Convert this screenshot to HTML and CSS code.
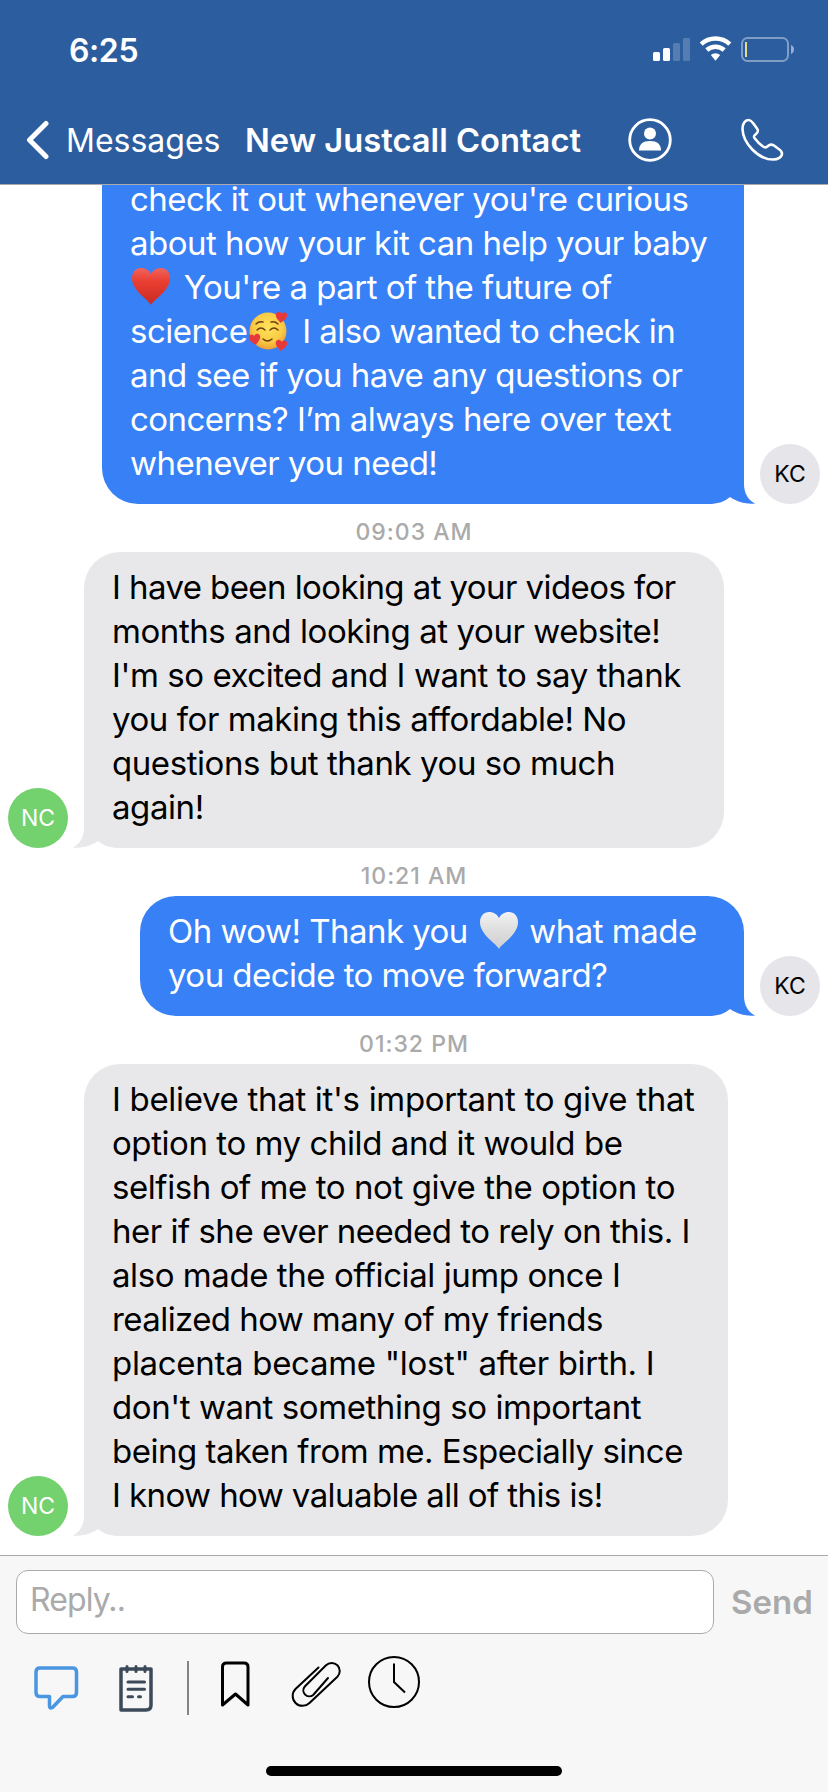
FILE: index.html
```
<!DOCTYPE html>
<html lang="en">
<head>
<meta charset="utf-8">
<title>New Justcall Contact</title>
<link rel="stylesheet" href="styles.css">
</head>
<body>
<svg class="defs" width="0" height="0" aria-hidden="true">
  <defs>
    <linearGradient id="red" x1="0" y1="0" x2="0" y2="1"><stop offset="0" stop-color="#f0655c"/><stop offset=".35" stop-color="#ea3f33"/><stop offset="1" stop-color="#c92a20"/></linearGradient>
    <linearGradient id="white" x1="0" y1="0" x2="0" y2="1"><stop offset="0" stop-color="#f2f2f2"/><stop offset=".5" stop-color="#dedede"/><stop offset="1" stop-color="#cfcfcf"/></linearGradient>
    <radialGradient id="face" cx=".5" cy=".4" r=".6"><stop offset="0" stop-color="#fde25a"/><stop offset=".65" stop-color="#fbcb45"/><stop offset="1" stop-color="#ee9f33"/></radialGradient>
    <path id="heart" d="M20 38C17 32 1 24 1 11C1 5 5 1 10 1C15 1 18 3.500 20 7C22 3.500 25 1 30 1C35 1 39 5 39 11C39 24 23 32 20 38Z"/>
    <path id="tail" d="M0 0C0 9 4 16 11 19.500C3 20.500-7 18-14 13C-20 18-27 20-35 20H-36V0Z"/>
  </defs>
</svg>
<div class="phone">
  <header class="header">
    <div class="status">
      <span class="clock">6:25</span>
      <svg class="indicators" width="144" height="28" viewBox="0 0 144 28">
        <g fill="#fff"><rect x="1" y="16" width="7" height="9" rx="1.500"/><rect x="11" y="12" width="7" height="13" rx="1.500"/></g>
        <g fill="#fff" opacity=".2"><rect x="21" y="7" width="7" height="18" rx="1.500"/><rect x="31" y="2" width="7" height="23" rx="1.500"/></g>
        <g fill="none" stroke="#fff" stroke-width="4.500"><path d="M49.200 8.200A21 21 0 0 1 77.800 8.200"/><path d="M54.800 14A13 13 0 0 1 72.200 14"/></g>
        <path d="M58.800 19A7 7 0 0 1 68.200 19L63.500 24.800Z" fill="#fff"/>
        <rect x="90" y="2" width="46" height="23" rx="5.500" fill="none" stroke="#fff" stroke-opacity=".4" stroke-width="2"/>
        <rect x="93" y="6" width="2" height="15" fill="#e3dc8b"/>
        <path d="M139 9C143 10 143 17 139 18Z" fill="#fff" opacity=".5"/>
      </svg>
    </div>
    <nav class="nav">
      <svg class="back" width="24" height="40" viewBox="0 0 24 40"><path d="M20 3.500L3.500 20L20 36.500" fill="none" stroke="#fff" stroke-width="5" stroke-linecap="round" stroke-linejoin="round"/></svg>
      <span class="back-label">Messages</span>
      <span class="title">New Justcall Contact</span>
      <svg class="person" width="44" height="44" viewBox="0 0 44 44"><circle cx="22" cy="22" r="20.300" fill="none" stroke="#fff" stroke-width="2.800"/><circle cx="22" cy="15.500" r="6" fill="#fff"/><path d="M11 32.500C11 26 15 23 22 23S33 26 33 32.500Z" fill="#fff"/></svg>
      <svg class="call" width="44" height="44" viewBox="0 0 44 44"><path d="M8.500 2C5 2 2.500 5.500 2.500 11C3 25 18 41.500 33 41.500C38 41.500 42 39 42 35.500C42 33 40.500 32 38 30.500L34 27.500C31.500 26 30 26 28 28C26 30 25 30 23 28.500C19.500 26 17 23.500 14.500 20C13.500 18.500 13.500 18 15.500 16.500C18.500 14 18.500 12.500 17 10.500L13 5C11.500 3 10.500 2 8.500 2Z" fill="none" stroke="#fff" stroke-width="2.600" stroke-linejoin="round"/></svg>
    </nav>
  </header>

  <main class="thread">
    <section class="row out">
      <div class="bubble first">
        <p>check it out whenever you're curious</p>
        <p>about how your kit can help your baby</p>
        <p><svg class="emoji lead" viewBox="0 0 40 40"><use href="#heart" fill="url(#red)"/></svg> You're a part of the future of</p>
        <p>science<svg class="emoji face" viewBox="0 0 40 40"><circle cx="20" cy="20" r="18.500" fill="url(#face)"/><g fill="none" stroke="#6b3d12" stroke-width="1.400" stroke-linecap="round"><path d="M8 13Q11 10 15 11M23 11Q27 10 30 13M9 19Q13 15 17 19M22 19Q26 15 30 19M15 28Q19.500 32 24 28"/></g><g fill="#e6393b"><use href="#heart" transform="translate(28 0) rotate(8) scale(.3)"/><use href="#heart" transform="translate(0 24) rotate(-10) scale(.3)"/><use href="#heart" transform="translate(28 28) rotate(8) scale(.3)"/></g></svg> I also wanted to check in</p>
        <p>and see if you have any questions or</p>
        <p>concerns? I’m always here over text</p>
        <p>whenever you need!</p>
        <svg class="tail" width="48" height="20" viewBox="-36 0 48 20"><use href="#tail"/></svg>
      </div>
      <span class="avatar">KC</span>
    </section>
    <time class="stamp">09:03 AM</time>
    <section class="row in">
      <span class="avatar">NC</span>
      <div class="bubble second">
        <p class="tight">I have been looking at your videos for</p>
        <p>months and looking at your website!</p>
        <p>I'm so excited and I want to say thank</p>
        <p>you for making this affordable! No</p>
        <p>questions but thank you so much</p>
        <p>again!</p>
        <svg class="tail" width="48" height="20" viewBox="-36 0 48 20"><use href="#tail"/></svg>
      </div>
    </section>
    <time class="stamp">10:21 AM</time>
    <section class="row out">
      <div class="bubble third">
        <p>Oh wow! Thank you <svg class="emoji mid" viewBox="0 0 40 40"><use href="#heart" fill="url(#white)"/></svg> what made</p>
        <p>you decide to move forward?</p>
        <svg class="tail" width="48" height="20" viewBox="-36 0 48 20"><use href="#tail"/></svg>
      </div>
      <span class="avatar">KC</span>
    </section>
    <time class="stamp">01:32 PM</time>
    <section class="row in">
      <span class="avatar">NC</span>
      <div class="bubble fourth">
        <p class="loose">I believe that it's important to give that</p>
        <p>option to my child and it would be</p>
        <p>selfish of me to not give the option to</p>
        <p class="snug">her if she ever needed to rely on this. I</p>
        <p>also made the official jump once I</p>
        <p class="tight">realized how many of my friends</p>
        <p class="loose">placenta became "lost" after birth. I</p>
        <p>don't want something so important</p>
        <p class="snug">being taken from me. Especially since</p>
        <p class="tight">I know how valuable all of this is!</p>
        <svg class="tail" width="48" height="20" viewBox="-36 0 48 20"><use href="#tail"/></svg>
      </div>
    </section>
  </main>

  <footer class="composer">
    <div class="reply-row">
      <div class="field">Reply..</div>
      <span class="send">Send</span>
    </div>
    <div class="tools">
      <svg width="420" height="60" viewBox="0 1655 420 60" fill="none">
        <path d="M40 1668H72.500Q76.500 1668 76.500 1672V1692.500Q76.500 1696.500 72.500 1696.500H63L52.500 1707.500Q49.500 1709 49.500 1706V1696.500H40Q36 1696.500 36 1692.500V1672Q36 1668 40 1668Z" stroke="#4b96e0" stroke-width="3.500" stroke-linejoin="round"/>
        <g stroke="#3b4959" stroke-width="3.500"><path d="M121 1669H151V1705Q151 1710 146 1710H121Z" stroke-linejoin="round"/><path d="M127 1666.500V1671.500M136 1666.500V1671.500M145 1666.500V1671.500M128 1682H144.500M128 1689.300H144.500M128 1696.700H132.500M138.500 1696.700H140.500" stroke-width="3" stroke-linecap="round"/></g>
        <path d="M188 1661V1715" stroke="#666" stroke-width="1.600"/>
        <path d="M222.500 1705V1667Q222.500 1663 226.500 1663H244Q248 1663 248 1667V1705L235.500 1694Z" stroke="#000" stroke-width="3" stroke-linejoin="round"/>
        <path d="M318.500 1667.500L295.500 1689A9.900 9.900 0 0 0 309.500 1703L337.400 1676.700A8 8 0 0 0 326 1665.300L304.800 1686.500A6 6 0 0 0 313.200 1695L328 1678" stroke="#000" stroke-width="2" stroke-linecap="round"/>
        <circle cx="394" cy="1682" r="25" stroke="#000" stroke-width="2"/><path d="M394 1663.500V1682L405 1692.500" stroke="#000" stroke-width="2"/>
      </svg>
    </div>
    <div class="home"></div>
  </footer>
</div>
</body>
</html>
```

FILE: styles.css
```
* { box-sizing: border-box; }
body { margin: 0; font-family: Inter, "Liberation Sans", sans-serif; background: #fff; }
.defs { position: absolute; }
.phone { width: 828px; height: 1792px; display: flex; flex-direction: column; overflow: hidden; }
svg { flex: none; display: block; }

.header { height: 184px; flex: none; background: #2c5d9f; color: #fff; }
.status { height: 96px; padding: 36px 32px 0 69px; display: flex; justify-content: space-between; align-items: flex-start; }
.clock { font-size: 32px; line-height: 30px; font-weight: 600; letter-spacing: -0.4px; }
.nav { height: 88px; padding-left: 26px; display: flex; align-items: center; white-space: nowrap; }
.back-label { margin-left: 16px; width: 179px; font-size: 32px; }
.title { width: 358px; font-size: 32.7px; font-weight: 600; }
.person { margin-left: 25px; }
.call { margin-left: 68px; }

.thread { flex: 1; min-height: 0; border-top: 1px solid #aaa; overflow: hidden; }
.row { display: flex; align-items: flex-end; gap: 16px; }
.out { justify-content: flex-end; padding-right: 8px; }
.in { padding-left: 8px; }
.bubble { position: relative; padding: 13px 28px 19px; border-radius: 36px; font-size: 33px; line-height: 44px; white-space: nowrap; letter-spacing: -0.43px; }
.bubble p { margin: 0; height: 44px; }
.out .bubble { background: #3880f6; color: #fff; border-bottom-right-radius: 0; letter-spacing: -0.53px; }
.in .bubble { background: #e8e8ea; color: #000; border-bottom-left-radius: 0; }
.bubble .tight { letter-spacing: -0.58px; }
.bubble .snug { letter-spacing: -0.5px; }
.bubble .loose { letter-spacing: -0.31px; }
.tail { position: absolute; bottom: 0; right: -12px; fill: #3880f6; background: #fff; }
.in .tail { right: auto; left: -12px; transform: scaleX(-1); fill: #e8e8ea; }
.first { width: 642px; height: 319px; border-radius: 0 0 0 36px; }
.out .first { padding-top: 0; margin-top: -1px; height: 320px; }
.first p:first-child { height: 37px; line-height: 30px; }
.second { width: 640px; }
.third { width: 604px; }
.fourth { width: 644px; }
.emoji { display: inline-block; width: 40px; height: 40px; vertical-align: -8px; }
.lead { margin: 0 4px 0 1px; }
.face { margin: 0 5px 0 1px; }
.mid { margin: 0 2px; }
.avatar { flex: none; width: 60px; height: 60px; border-radius: 50%; display: flex; align-items: center; justify-content: center; font-size: 23px; background: #e5e5ea; color: #000; }
.in .avatar { background: #73d16e; color: #fff; }
.stamp { display: block; height: 48px; padding-top: 8px; line-height: 40px; font-size: 23px; font-weight: 500; letter-spacing: 1px; text-align: center; color: #aaa; }

.composer { height: 237px; flex: none; border-top: 1px solid #aaa; background: #f7f7f7; padding-top: 14px; }
.reply-row { display: flex; align-items: center; padding-left: 16px; }
.field { width: 698px; height: 64px; border: 1px solid #aaa; border-radius: 12px; background: #fff; color: #aaa; font-size: 32px; line-height: 58px; letter-spacing: -0.9px; padding-left: 13px; }
.send { margin-left: 17px; color: #aaa; font-size: 33px; font-weight: 600; }
.tools { height: 82px; padding-top: 21px; }
.home { width: 296px; height: 10px; margin: 50px auto 0; border-radius: 5px; background: #000; }
```
